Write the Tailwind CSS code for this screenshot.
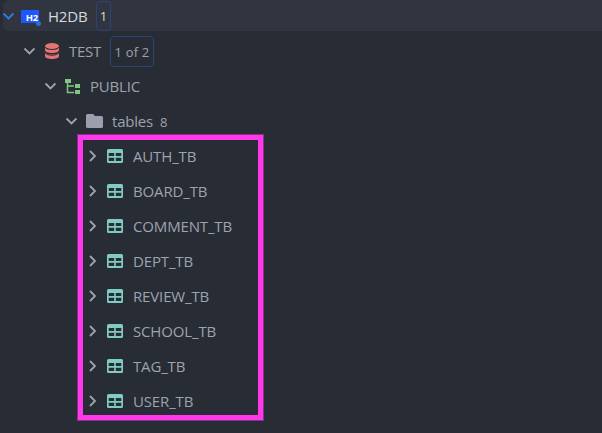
<!DOCTYPE html>
<html lang="en">

<head>
    <meta charset="UTF-8">
    <meta name="viewport" content="width=device-width, initial-scale=1.0">
    <title>Database Explorer</title>
    <script src="https://cdn.jsdelivr.net/npm/@tailwindcss/browser@4"></script>
</head>

<body class="h-screen overflow-hidden bg-[#282c34] text-[#9da3af] font-['Open_Sans','Noto_Sans',sans-serif] text-[15px]">
    <svg class="hidden">
        <symbol id="chevron-down" viewBox="0 0 12 12">
            <path d="M1.500 3.500L6.500 8.500L11.500 3.500" fill="none" stroke="currentColor" stroke-width="1.8" />
        </symbol>
        <symbol id="chevron-right" viewBox="0 0 12 12">
            <path d="M3 1L8 6L3 11" fill="none" stroke="currentColor" stroke-width="1.8" />
        </symbol>
        <symbol id="table" viewBox="0 0 16 14">
            <path fill="currentColor" fill-rule="evenodd" d="M1.500 0h13A1.500 1.500 0 0 1 16 1.500v11a1.500 1.500 0 0 1-1.500 1.500h-13A1.500 1.500 0 0 1 0 12.500v-11A1.500 1.500 0 0 1 1.500 0zM1.700 4v3h5.500V4zM8.800 4v3h5.500V4zM1.700 8.800V12h5.500V8.800zM8.800 8.800V12h5.500V8.800z" />
        </symbol>
    </svg>

    <div class="relative h-full">
        <div class="flex flex-col gap-[3px]">
            <div class="mb-px ml-[3px] flex h-[31px] items-center rounded-l-md bg-[#31353f] pt-px">
                <svg class="-ml-px size-3 shrink-0 text-[#2b7cf0]"><use href="#chevron-down" /></svg>
                <div class="relative ml-[7px] mt-px flex h-[13px] w-[18px] items-center justify-end bg-[#1f57ff] pr-px text-[9.5px] font-bold leading-none text-white">
                    <span class="translate-y-px tracking-[-0.2px]">H2</span>
                    <span class="absolute -bottom-[3px] -right-[2px] size-[5px] rounded-full bg-[#1d72e8]"></span>
                </div>
                <span class="ml-[9px] w-12 tracking-[-0.2px] text-[#d7dae0]">H2DB</span>
                <span class="-mt-px flex h-[30px] w-[15px] items-center justify-center rounded border border-[#27457a] pt-[3px] text-[13px] text-[#d7dae0]">1</span>
            </div>

            <div class="flex h-8 items-center pl-[23px]">
                <svg class="size-3 shrink-0"><use href="#chevron-down" /></svg>
                <svg class="ml-[10px] h-4 w-[14px] text-[#e57373]" viewBox="0 0 14 16" fill="currentColor">
                    <ellipse cx="7" cy="3" rx="7" ry="3" />
                    <path d="M0 4.800C1 6.300 4 7 7 7s6-.7 7-2.200V7c0 1.700-3.100 3-7 3S0 8.700 0 7z" />
                    <path d="M0 9.300c1 1.500 4 2.200 7 2.200s6-.7 7-2.200V13c0 1.700-3.100 3-7 3s-7-1.300-7-3z" />
                    <path d="M0 9.800c1 1.600 4 2.400 7 2.400s6-.8 7-2.400" fill="none" stroke="#282c34" />
                </svg>
                <span class="ml-[10px] w-[41px] tracking-[-0.3px]">TEST</span>
                <span class="flex h-[31px] w-11 items-center justify-center rounded border border-[#27457a] pt-[3px] text-[13px] tracking-[0.2px]">1 of 2</span>
            </div>

            <div class="flex h-8 items-center pl-11">
                <svg class="size-3 shrink-0"><use href="#chevron-down" /></svg>
                <svg class="ml-[9px] h-4 w-4 text-[#81c784]" viewBox="0 0 16 16" fill="currentColor">
                    <path d="M0 1h6v4H0zM10 6h5v4h-5zM10 12h5v4h-5z" />
                    <path d="M2.500 5v9.500H9M2.500 8H9" fill="none" stroke="currentColor" stroke-width="1.500" />
                </svg>
                <span class="ml-[9px] tracking-[-0.2px]">PUBLIC</span>
            </div>

            <div class="flex h-8 items-center pl-[65px]">
                <svg class="size-3 shrink-0"><use href="#chevron-down" /></svg>
                <svg class="ml-[9px] h-[14px] w-[17px]" viewBox="0 0 17 14" fill="#9b9fad">
                    <path d="M1.500 0H7l2 2h6.500A1.500 1.500 0 0 1 17 3.500v9a1.500 1.500 0 0 1-1.500 1.500h-14A1.500 1.500 0 0 1 0 12.500v-11A1.500 1.500 0 0 1 1.500 0z" />
                </svg>
                <span class="ml-[9px] w-12 tracking-[-0.2px]">tables</span>
                <span class="pt-[3px] text-[13px]">8</span>
            </div>

            <ul class="flex flex-col gap-[3px]" id="table-list"></ul>
        </div>

        <!-- Marker around the table names -->
        <div class="absolute left-[78px] top-[135px] h-[285px] w-[185px] border-[5px] border-[#ff38ec] ring-1 ring-[#ff38ec]/45"></div>
    </div>

    <script>
        const tables = ['AUTH_TB', 'BOARD_TB', 'COMMENT_TB', 'DEPT_TB', 'REVIEW_TB', 'SCHOOL_TB', 'TAG_TB', 'USER_TB'];
        const tableList = document.getElementById('table-list');

        tables.forEach(name => {
            const item = document.createElement('li');
            item.className = 'flex h-8 items-center pl-[87px]';
            item.innerHTML = `
                <svg class="size-3 shrink-0"><use href="#chevron-right" /></svg>
                <svg class="ml-2 h-[14px] w-4 shrink-0 text-[#80cbc4]"><use href="#table" /></svg>
                <span class="ml-[10px] whitespace-nowrap tracking-[-0.15px]">${name}</span>
            `;
            tableList.appendChild(item);
        });
    </script>
</body>

</html>
